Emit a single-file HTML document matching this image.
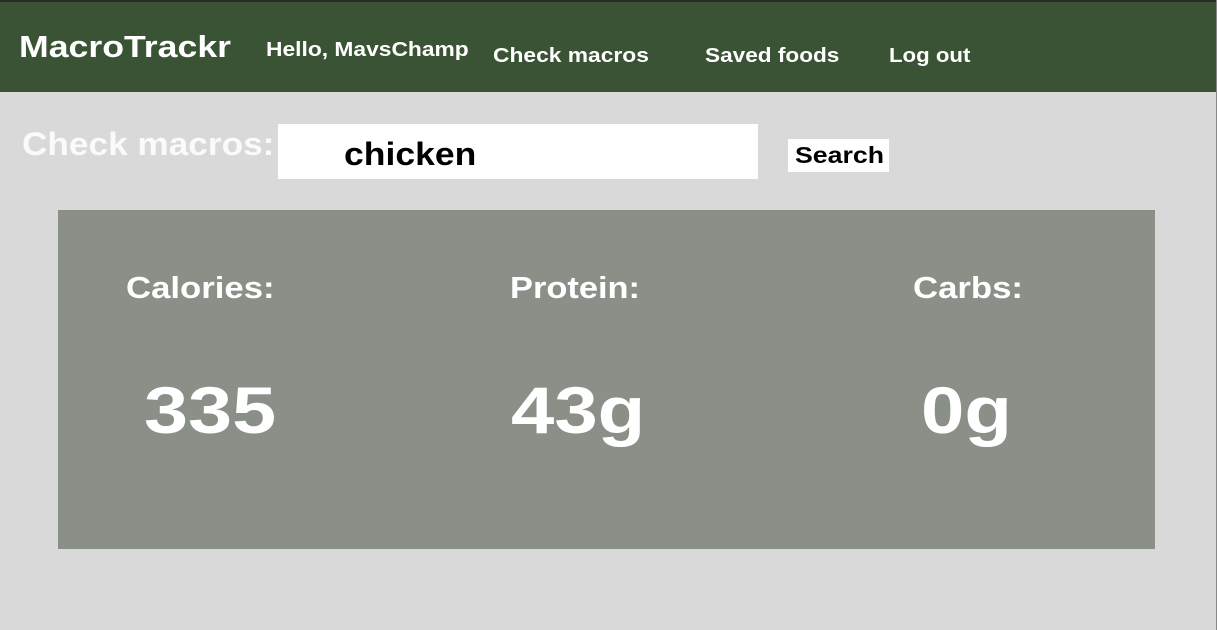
<!DOCTYPE html>
<html><head><style>
*{margin:0;padding:0;box-sizing:border-box}
body{width:1217px;height:630px;background:#d9d9d9;position:relative;overflow:hidden;font-family:"Liberation Sans",sans-serif;font-weight:bold}
.a{position:absolute;white-space:nowrap;line-height:1;transform-origin:left top}
</style></head><body>
<div class="a" style="left:0;top:0;width:1217px;height:2px;background:#2a2a2a"></div>
<div class="a" style="left:0;top:2px;width:1217px;height:90px;background:#3a5334"></div>
<div class="a" style="left:1216px;top:0;width:1px;height:630px;background:#888"></div>
<div class="a" style="left:19px;top:31px;font-size:31px;color:#fff;transform:scaleX(1.15)">MacroTrackr</div>
<div class="a" style="left:266px;top:40px;font-size:20px;color:#fff;transform:scaleX(1.14)">Hello, MavsChamp</div>
<div class="a" style="left:493px;top:46px;font-size:20px;color:#fff;transform:scaleX(1.14)">Check macros</div>
<div class="a" style="left:705px;top:46px;font-size:20px;color:#fff;transform:scaleX(1.13)">Saved foods</div>
<div class="a" style="left:889px;top:46px;font-size:20px;color:#fff;transform:scaleX(1.11)">Log out</div>
<div class="a" style="left:22px;top:128px;font-size:32px;color:#fafafa;transform:scaleX(1.1)">Check macros:</div>
<div class="a" style="left:278px;top:124px;width:480px;height:55px;background:#fff"></div>
<div class="a" style="left:344px;top:138px;font-size:32px;color:#000;transform:scaleX(1.11)">chicken</div>
<div class="a" style="left:788px;top:139px;width:101px;height:33px;background:#fff"></div>
<div class="a" style="left:795px;top:144px;font-size:23px;color:#000;transform:scaleX(1.16)">Search</div>
<div class="a" style="left:58px;top:210px;width:1097px;height:339px;background:#8a9088"></div>
<div class="a" style="left:126px;top:272px;font-size:31px;color:#fff;transform:scaleX(1.12)">Calories:</div>
<div class="a" style="left:510px;top:272px;font-size:31px;color:#fff;transform:scaleX(1.11)">Protein:</div>
<div class="a" style="left:913px;top:272px;font-size:31px;color:#fff;transform:scaleX(1.12)">Carbs:</div>
<div class="a" style="left:144px;top:377px;font-size:66px;color:#fff;transform:scaleX(1.2)">335</div>
<div class="a" style="left:511px;top:377px;font-size:66px;color:#fff;transform:scaleX(1.18)">43g</div>
<div class="a" style="left:921px;top:377px;font-size:66px;color:#fff;transform:scaleX(1.18)">0g</div>
</body></html>
